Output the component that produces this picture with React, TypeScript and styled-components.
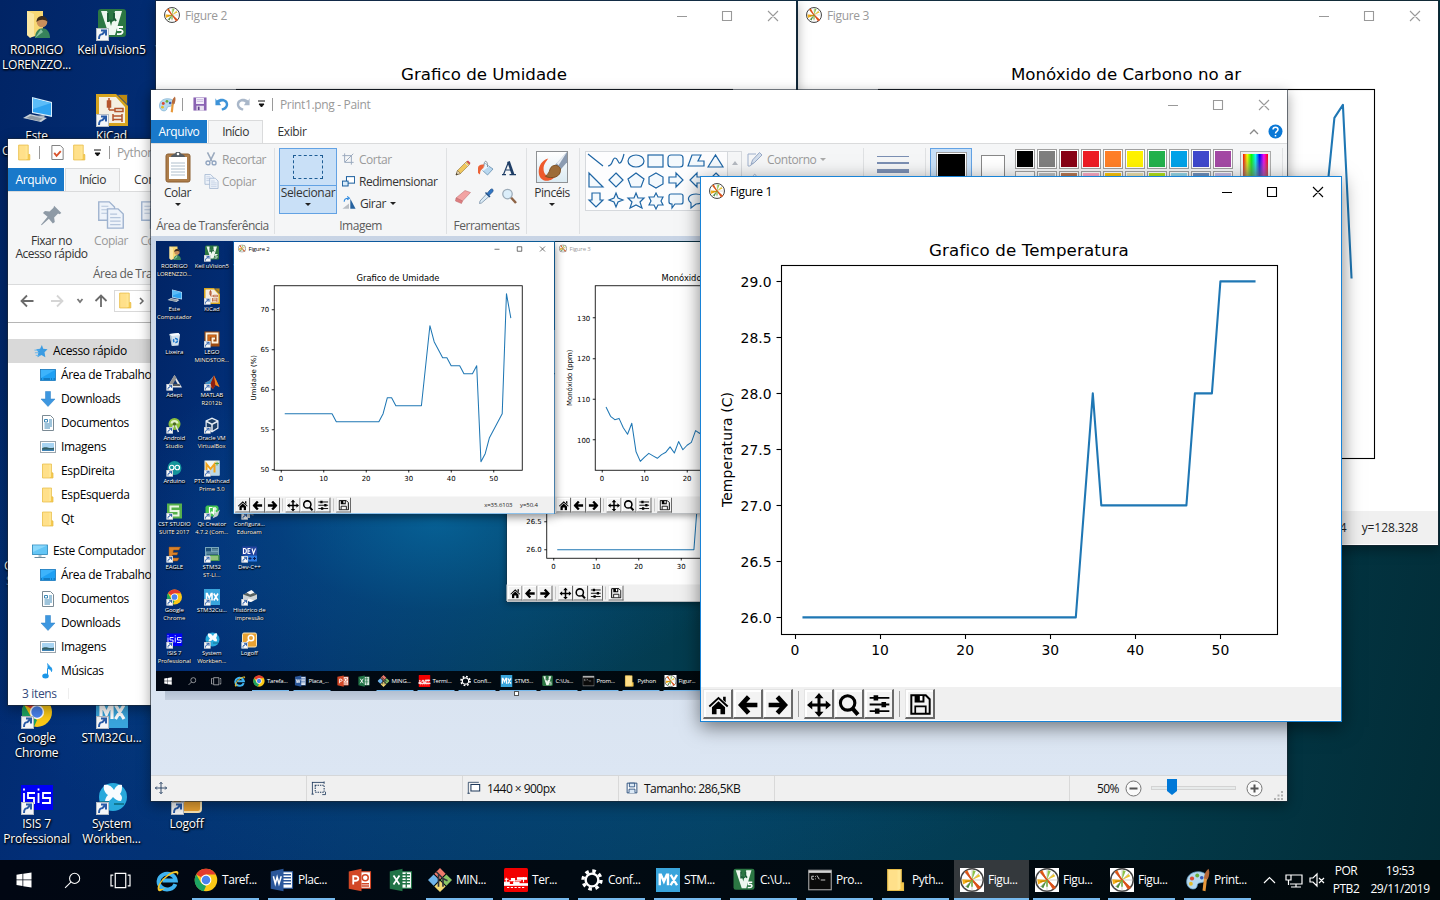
import React from "react";
import styled, { createGlobalStyle, css } from "styled-components";

const Global = createGlobalStyle`
  * { box-sizing: border-box; }
  html, body { margin: 0; padding: 0; overflow: hidden; background: #02304f; }
  body { font-family: "Open Sans", "Noto Sans", sans-serif; font-size: 12px; letter-spacing: -0.35px; color: #222; }
  svg { display: block; flex: none; }
`;

/* ---------- icons ---------- */

const paths: Record<string, React.ReactNode> = {
  user: (
    <>
      <path d="M6 3h16v24l-13 2-3-2z" fill="#f7d774" />
      <path d="M6 3l7 3v22l-4 2-3-3z" fill="#fbe7a3" />
      <circle cx="21" cy="14" r="5.3" fill="#c98f5c" />
      <path d="M15.5 14c0-8 11-8 11 0-2-3-8-3-11 0z" fill="#3a2a1c" />
      <path d="M14 30c0-13 15-13 15 0z" fill="#37835b" />
      <path d="M14 30l6-9 2 3z" fill="#8ac2a2" />
    </>
  ),
  computer: (
    <>
      <path d="M11 3l20 5v15l-20-4z" fill="#d7eefc" />
      <path d="M12 4.500l18 4.500v12.500l-18-3.500z" fill="#2fa3f0" />
      <path d="M12 4.500l18 4.500-18 6z" fill="#5bbcf8" />
      <path d="M2 24l7-4 17 4-6 4z" fill="#c9d1d8" />
      <path d="M5 24l5-2.500 12 3-4 2.500z" fill="#8f9aa4" />
      <path d="M14 22l9 2 1-3z" fill="#aab5bf" />
    </>
  ),
  bin: (
    <>
      <path d="M6 6l18-2 3 4-3 21-13 1z" fill="#d5e3ee" />
      <path d="M6 6l18-2 3 4-17 2z" fill="#f7fbff" />
      <path d="M10 10l-4-4 4 23 2 1z" fill="#a9bfd0" />
      <circle cx="18" cy="19" r="4" fill="none" stroke="#1c78cf" strokeWidth="3" strokeDasharray="6 2" />
    </>
  ),
  adept: (
    <>
      <path d="M16 2L31 27H1z" fill="#e5e5e5" />
      <path d="M16 9l8 14H9z" fill="#14356d" />
      <path d="M16 2l4 6-11 19H1z" fill="#8f9092" />
      <path d="M14 20h12l2 4H12z" fill="#55585c" />
    </>
  ),
  android: (
    <>
      <circle cx="16" cy="14" r="12" fill="#8bbf3d" />
      <path d="M8 13a8 7 0 0116 0z" fill="#e3f1c8" />
      <path d="M16 12l8 18M16 12L9 30" stroke="#dfe3e6" strokeWidth="3" />
      <circle cx="16" cy="14" r="3.500" fill="#4a6a22" />
    </>
  ),
  arduino: (
    <>
      <circle cx="16" cy="16" r="14" fill="#15959b" />
      <circle cx="10.500" cy="15" r="4.500" fill="none" stroke="#fff" strokeWidth="2.400" />
      <circle cx="21.500" cy="15" r="4.500" fill="none" stroke="#fff" strokeWidth="2.400" />
    </>
  ),
  cst: (
    <>
      <rect x="1" y="1" width="30" height="30" fill="#56b04c" />
      <path d="M25 7H8v9h16v9H7" fill="none" stroke="#e9f7e4" strokeWidth="4" />
    </>
  ),
  eagle: <path d="M5 2h23l-3 6H14l-1 5h10l-2 5h-9l-1 6h14l-3 6H5z" fill="#d9822b" stroke="#8c4a10" />,
  chrome: (
    <>
      <circle cx="16" cy="16" r="15" fill="#fbc916" />
      <path d="M16 16L3 8.500A15 15 0 0129 8.500H16z" fill="#e33b2e" />
      <path d="M3 8.500L9.500 20l6.500 4-3 7A15 15 0 013 8.500z" fill="#1da462" />
      <circle cx="16" cy="16" r="7.200" fill="#fff" />
      <circle cx="16" cy="16" r="5.700" fill="#4a83ee" />
    </>
  ),
  isis: (
    <>
      <rect y="3" width="32" height="25" fill="#0000f5" />
      <path d="M3 11v10M3 6.500v2M14 11H7v5h6v5H6M17.500 11v10M17.500 6.500v2M30 11h-8v5h7v5h-8" fill="none" stroke="#fff" strokeWidth="1.800" />
    </>
  ),
  keil: (
    <>
      <rect x="2" y="1" width="28" height="28" rx="3" fill="#2c7743" />
      <path d="M5 3h6l4 15 4-15h7l-7 24h-6z" fill="#eef7ef" />
      <path d="M12 5v9M12 11c2 3 6 2 6-1V5M18 10l2 3" stroke="#1d5f37" strokeWidth="2" fill="none" />
      <path d="M27 19h-5v3h3c3 1 2 5-4 4" fill="none" stroke="#fff" strokeWidth="1.800" />
    </>
  ),
  kicad: (
    <>
      <path d="M1 1h20l10 10v20H1z" fill="#f5efe2" />
      <path d="M0 0h21l11 11v21H0zM3 3v26h26V13l-9-10z" fill="#d6a41f" fillRule="evenodd" />
      <path d="M20 0h12v12z" fill="#1a3e7c" />
      <path d="M22 1l9 9V1z" fill="#bd8a10" />
      <path d="M13 4v12M11.500 7h3v6h-3zM13 16h6M19 14.500h8v3h-8zM17 22h9M17 25.500h9M17 20v7M26 20v8" stroke="#b4542d" strokeWidth="1.500" fill="none" />
    </>
  ),
  lego: (
    <>
      <rect x="1" y="1" width="30" height="30" fill="#9c4c12" />
      <path d="M5 27V5h22v18H17v-8h5" fill="none" stroke="#fff4df" strokeWidth="3.600" />
      <path d="M10 27V10h13" fill="none" stroke="#e0701c" strokeWidth="3" />
    </>
  ),
  matlab: (
    <>
      <path d="M1 18l10-5 9-10 11 23-8-4-5 8-7-7z" fill="#d9531e" />
      <path d="M1 18l10-5 9-10-7 17-4 3z" fill="#3b8fc7" />
      <path d="M20 3l3 19-5 8-5-10z" fill="#8d1f12" />
      <path d="M20 3l11 23-8-4z" fill="#f08a24" />
    </>
  ),
  vbox: (
    <>
      <path d="M16 1l13 6v16l-13 8L3 23V7z" fill="#e7eef5" />
      <path d="M16 4l9 4-9 5-9-5zM5.500 11l9 4.500V27l-9-5.500zM26.500 11l-9 4.500V27l9-5.500z" fill="#1c3e67" />
    </>
  ),
  mathcad: (
    <>
      <rect x="1" y="1" width="30" height="30" fill="#f2f6ef" />
      <path d="M1 31L31 1v30z" fill="#b8d8e8" />
      <path d="M5 25V8l8 10 8-10v17" fill="none" stroke="#f2a31b" strokeWidth="4" />
      <path d="M26 3v8M22 7h8" stroke="#5fa43b" strokeWidth="2" />
    </>
  ),
  qt: (
    <>
      <path d="M6 5h20l3 3v15l-4 4H6L3 23V8z" fill="#42c552" />
      <path d="M17 9h-6v11h8V9M15 17l5 6M22 8v12h4M20 12h6" stroke="#fff" strokeWidth="2.400" fill="none" />
      <path d="M17 31l4-9 11-9-5 13z" fill="#c5cdd3" />
    </>
  ),
  stlink: (
    <>
      <rect x="2" y="2" width="28" height="20" fill="#7aa7bc" />
      <rect x="4" y="4" width="10" height="7" fill="#1e4f76" />
      <path d="M16 5h12M16 8h12M5 14h23M5 17h23" stroke="#24566e" strokeWidth="1.600" />
      <rect x="12" y="18" width="19" height="12" fill="#4e9b4f" />
      <path d="M14 22h14M14 26h14" stroke="#d6e9a5" strokeWidth="2" />
    </>
  ),
  mx: (
    <>
      <rect width="32" height="32" fill="#39a5dc" />
      <path d="M5 23V9h1.500l4 9 4-9H16v14M19.500 9l8.500 14M28 9l-8.500 14" stroke="#fff" strokeWidth="3.200" fill="none" />
    </>
  ),
  butterfly: (
    <>
      <circle cx="17" cy="15" r="14" fill="#28a9dc" />
      <path d="M8 3c5-1 8 2 10 5 2-4 4-6 8-5 0 4 0 6-2 9 3 3 2 5 1 7-4 0-6-2-8-4-2 3-5 5-8 5 0-3 1-5 3-7-3-2-5-6-4-10z" fill="#f8fcff" />
      <path d="M4 20h9M18 22h10" stroke="#127994" strokeWidth="2" />
    </>
  ),
  wifi: (
    <>
      <path d="M2 12h28M5 17h22M15 2v28" stroke="#c6d0da" strokeWidth="4" />
      <path d="M10 20l14-8v14z" fill="#6e7f90" />
    </>
  ),
  dev: (
    <>
      <rect x="1" y="1" width="30" height="18" rx="2" fill="#24449e" />
      <path d="M4 5v10h2c5 0 5-10 0-10zM18 5h-5v10h5M13 10h4M21 5l3 10 4-10" stroke="#fff" strokeWidth="2.200" fill="none" />
      <rect x="6" y="19" width="25" height="12" fill="#2e7be2" />
      <path d="M14 25h6M17 22v6M23 25h6M26 22v6" stroke="#0c2058" strokeWidth="2" />
    </>
  ),
  printer: (
    <>
      <path d="M3 11l15-5 13 5v9l-12 6-16-6z" fill="#cdd3d6" />
      <path d="M3 11l15-5 13 5-13 5z" fill="#56605f" />
      <path d="M10 7l10-5 6 5-9 4z" fill="#f3f5f6" />
      <path d="M8 22l10 4 7-3-10-4z" fill="#fafafa" />
    </>
  ),
  key: (
    <>
      <rect x="2" y="2" width="28" height="28" rx="3" fill="#e9a233" stroke="#fbe6b5" strokeWidth="2" />
      <circle cx="19" cy="12" r="5.500" fill="none" stroke="#fff" strokeWidth="3" />
      <path d="M15 16l-8 9" stroke="#fff" strokeWidth="3" />
    </>
  ),
  ie: (
    <>
      <path d="M27 21a12 11 0 11.500-5H9" fill="none" stroke="#3fb3f0" strokeWidth="5.500" />
      <path d="M3 30C-2 22 20 0 30 3c2 1 1 4 0 6 0-5-5-4-10-1C10 14 4 22 5 27c2 2 6 0 8-1-4 4-8 6-10 4z" fill="#f5c52a" />
    </>
  ),
  word: (
    <>
      <rect x="15" y="5" width="15" height="22" fill="#fff" stroke="#2b579a" strokeWidth="1.500" />
      <path d="M17 9h11M17 13h11M17 17h11M17 21h11" stroke="#2b579a" strokeWidth="1.700" />
      <path d="M1 4.500L18 1v30L1 27.500z" fill="#2b579a" />
      <path d="M4.500 11l2.500 10 2.500-9 2.500 9L15 11" fill="none" stroke="#fff" strokeWidth="2" />
    </>
  ),
  ppt: (
    <>
      <rect x="15" y="5" width="15" height="22" fill="#fff" stroke="#d24726" strokeWidth="1.500" />
      <path d="M18 21h10M18 24h10" stroke="#d24726" strokeWidth="1.700" />
      <circle cx="23" cy="13" r="4" fill="none" stroke="#d24726" strokeWidth="2" />
      <path d="M1 4.500L18 1v30L1 27.500z" fill="#d24726" />
      <path d="M7 22V11h3c5 0 5 6 0 6H7" fill="none" stroke="#fff" strokeWidth="2.400" />
    </>
  ),
  excel: (
    <>
      <rect x="15" y="5" width="15" height="22" fill="#fff" stroke="#217346" strokeWidth="1.500" />
      <path d="M17 9h11M17 13h11M17 17h11M17 21h11M23 6v20" stroke="#217346" strokeWidth="1.700" />
      <path d="M1 4.500L18 1v30L1 27.500z" fill="#217346" />
      <path d="M6 10l8 12M14 10L6 22" stroke="#fff" strokeWidth="2.400" />
    </>
  ),
  git: (
    <>
      <path d="M16 0l7.500 7.500L16 15 8.500 7.500z" fill="#ef7a6b" />
      <path d="M7.500 8.500L15 16l-7.500 7.500L0 16z" fill="#6fb4ea" />
      <path d="M24.500 8.500L32 16l-7.500 7.500L17 16z" fill="#8cc665" />
      <path d="M16 17l7.500 7.500L16 32l-7.500-7.500z" fill="#f2d873" />
      <path d="M11 5l9 9v11M14 9v16M20 14l6 3" stroke="#33363d" strokeWidth="2.200" fill="none" />
    </>
  ),
  termite: (
    <>
      <rect width="32" height="32" rx="2" fill="#f20000" />
      <path d="M0 19h7v3h6v-3h7v2h12v2H0zM3 13v6M1 15h5M7 17h3v-3h4v4M15 17h8M18 13h12v2H18zM26 12v7" fill="#fff" stroke="#fff" strokeWidth="1.500" />
      <path d="M4 26h23" stroke="#fff" strokeWidth="1.300" strokeDasharray="3 2" />
    </>
  ),
  gear: (
    <>
      <circle cx="16" cy="16" r="8.500" fill="none" stroke="#fff" strokeWidth="3.200" />
      <circle cx="16" cy="16" r="12" fill="none" stroke="#fff" strokeWidth="4.500" strokeDasharray="4.700 4.725" />
    </>
  ),
  prompt: (
    <>
      <rect x="1" y="3" width="30" height="26" fill="#0a0a0a" stroke="#a4a4a4" strokeWidth="1.500" />
      <path d="M1 5h30" stroke="#d3d3d3" strokeWidth="3" />
      <path d="M8 11H5v4h3M10 11v1M10 14v1M12 10l3 5M17 16h6" stroke="#d6d6d6" strokeWidth="1.200" fill="none" />
    </>
  ),
  folder: (
    <>
      <path d="M5 2h18v28H5z" fill="#ffe694" />
      <path d="M5 2h13v28H5z" fill="#ffe08a" />
      <path d="M22 20l4-1v11h-8l4-2z" fill="#f5c94f" />
      <path d="M5 2h18v18h3v10H5z" fill="none" stroke="#e8bd48" strokeWidth="1.500" />
    </>
  ),
  mpl: (
    <>
      <circle cx="16" cy="16" r="15" fill="#fff" stroke="#444" strokeWidth="2" />
      <path d="M16 1v30M1 16h30M5.500 5.500l21 21M26.500 5.500l-21 21" stroke="#999" strokeWidth=".6" />
      <path d="M16 16L6 5l4-2z" fill="#f2711c" />
      <path d="M16 16L17 3l4 1z" fill="#8bc34a" />
      <path d="M16 16l11 9-3 4z" fill="#e2541b" />
      <path d="M16 16L3 15l1 7z" fill="#f5b01b" />
      <path d="M16 16l9-8 2 3z" fill="#e8c22c" />
      <path d="M16 16l-5 11-3-2z" fill="#4f8f3d" />
      <path d="M16 16L27 27M16 16L8 5" stroke="#d9521a" strokeWidth="2.500" />
      <path d="M16 17l-9 1" stroke="#c98a00" strokeWidth="2" />
      <path d="M16 16v9" stroke="#6cae3f" strokeWidth="2" />
    </>
  ),
  palette: (
    <>
      <path d="M16 5C6 5 0 12 1 20c1 8 10 10 13 6 2-3 0-5 4-6 5-1 11-2 10-8-1-5-6-7-12-7z" fill="#b5d9ef" stroke="#5f9bc4" />
      <circle cx="8" cy="14" r="2.800" fill="#d94a34" />
      <circle cx="15" cy="10" r="2.600" fill="#67ae3c" />
      <circle cx="6.500" cy="21" r="2.600" fill="#e6bd2c" />
      <circle cx="21" cy="13" r="2.400" fill="#3858b5" />
      <path d="M24 13l4 1-2 17-4-1z" fill="#e8993b" />
      <path d="M24 14l5 1c2-5 3-10 1-14-4 3-6 8-6 13z" fill="#b5693a" />
    </>
  ),
  desk: (
    <>
      <rect x="1" y="5" width="30" height="22" fill="#1ea0f4" stroke="#1173b8" strokeWidth="1.500" />
      <path d="M2 6h28L2 22z" fill="#3db3fb" />
      <path d="M2 24h28" stroke="#0b5b96" strokeWidth="2" strokeDasharray="2 3 13 2" />
    </>
  ),
  down: <path d="M11 1h10v15h9L16 31 2 16h9z" fill="#3d97e0" stroke="#2b7ec4" />,
  doc: (
    <>
      <path d="M5 1h16l6 6v24H5z" fill="#fff" stroke="#7b8a94" strokeWidth="2" />
      <path d="M9 9h6v5H9zM18 10h6M18 14h6M9 18h15M9 22h15M9 26h11" stroke="#3e89b7" strokeWidth="2" fill="none" />
    </>
  ),
  image: (
    <>
      <rect x="1" y="5" width="30" height="22" fill="#fff" stroke="#9aa5ad" strokeWidth="2" />
      <rect x="4" y="8" width="24" height="16" fill="#a8d4f2" />
      <path d="M4 19c8-6 15 2 24-2v7H4z" fill="#355f63" />
      <path d="M4 21h24v3H4z" fill="#3f83b5" />
    </>
  ),
  thispc: (
    <>
      <rect x="1" y="4" width="30" height="19" fill="#63c5f5" stroke="#2986b8" strokeWidth="1.600" />
      <path d="M2 5h28L2 18z" fill="#8bd8fb" />
      <path d="M13 26h6M5 29h22" stroke="#6b8a9c" strokeWidth="2" />
    </>
  ),
  music: (
    <>
      <path d="M15 1c2 6 11 7 8 16-1-4-4-6-8-6v14" fill="#1b96e8" stroke="#1b96e8" strokeWidth="2" />
      <ellipse cx="11" cy="26" rx="6.500" ry="5" fill="#1b96e8" />
    </>
  ),
  star: (
    <>
      <path d="M18 2l3 9 10 1-7 7 2 11-9-5-9 5 2-11-5-7 9-1z" fill="#3a9be2" />
      <path d="M1 14h12M2 20h10M4 26h9" stroke="#5bb2ee" strokeWidth="2" />
    </>
  ),
  checkdoc: (
    <>
      <path d="M4 1h18l6 6v24H4z" fill="#fff" stroke="#787878" strokeWidth="2" />
      <path d="M9 17l5 6 9-10" fill="none" stroke="#d9532c" strokeWidth="4" />
    </>
  ),
  save: (
    <>
      <path d="M1 1h30v30H1z" fill="#8a63b3" />
      <rect x="7" y="2" width="18" height="14" fill="#f3effa" />
      <path d="M9 6h14M9 10h14" stroke="#b9a5d5" strokeWidth="1.500" />
      <rect x="8" y="20" width="17" height="11" fill="#e8e2f0" />
      <rect x="11" y="22" width="4" height="8" fill="#5e3f8c" />
    </>
  ),
  undo: <path d="M1 3l3 5C16-1 32 6 30 19c-1 7-7 12-14 12l-1-5c8-2 11-7 9-12-2-4-9-5-14-1l4 6H1z" fill="#3d93d8" />,
  redo: <path d="M31 3l-3 5C16-1 0 6 2 19c1 7 7 12 14 12l1-5C9 24 6 19 8 14c2-4 9-5 14-1l-4 6h13z" fill="#a9b7c9" />,
  pin: <path d="M20 1l11 11-3 2-2-1-6 6 1 7-3 2-6-7L1 31l-1-1L10 18l-7-6 3-3 7 1 6-6z" fill="#8e9aa6" />,
  copy: (
    <>
      <path d="M2 1h12l6 6v15H2z" fill="#eef3fa" stroke="#9fb3cf" strokeWidth="1.600" />
      <path d="M5 6h8M5 10h12M5 14h12" stroke="#b5c5dc" strokeWidth="1.400" />
      <path d="M12 9h12l6 6v16H12z" fill="#eef3fa" stroke="#9fb3cf" strokeWidth="1.600" />
      <path d="M15 15h8M15 19h12M15 23h12M15 27h12" stroke="#b5c5dc" strokeWidth="1.400" />
    </>
  ),
  scissors: (
    <>
      <path d="M8 1l10 20M24 1L14 21" stroke="#9aa9bd" strokeWidth="3.500" />
      <circle cx="9" cy="25" r="4.500" fill="none" stroke="#8fa3bf" strokeWidth="3" />
      <circle cx="23" cy="25" r="4.500" fill="none" stroke="#8fa3bf" strokeWidth="3" />
    </>
  ),
  crop: <path d="M7 1v24h24M1 7h24v24M8 24L30 2" fill="none" stroke="#9aa9bd" strokeWidth="2.600" />,
  resize: (
    <>
      <rect x="11" y="4" width="20" height="16" fill="#fff" stroke="#1c5f9e" strokeWidth="2.500" />
      <rect x="1" y="15" width="14" height="12" fill="#d8ebfa" stroke="#1c5f9e" strokeWidth="2.500" />
    </>
  ),
  rotate: (
    <>
      <path d="M1 29L16 17v12z" fill="#b9bec4" />
      <path d="M19 29V6l12 23z" fill="#25629f" />
      <path d="M5 13c0-6 4-8 9-8M12 1l5 4-5 4" fill="none" stroke="#2f8ae0" strokeWidth="2.500" />
    </>
  ),
  pencil: (
    <>
      <path d="M2 30l3-9L23 3l6 6-18 18z" fill="#f0c75d" stroke="#80622a" />
      <path d="M23 3l3-2 5 5-2 3z" fill="#cf4b52" />
      <path d="M2 30l3-9 6 6z" fill="#e9d8b6" stroke="#63512e" />
      <path d="M2 30l1-4 3 3z" fill="#333" />
      <path d="M20 6l6 6" stroke="#ddd" strokeWidth="2" />
    </>
  ),
  bucket: (
    <>
      <path d="M14 7l16 11-11 12L6 18z" fill="#b9d8ef" stroke="#5f88ab" strokeWidth="1.500" />
      <path d="M14 7l8 6-12 9-4-4z" fill="#e9f5fd" />
      <path d="M12 13C11-1 20-1 19 14" fill="none" stroke="#7f8b95" strokeWidth="1.800" />
      <path d="M12 9C5 8 0 11 0 16v10l4 3c1-7 0-8 7-13z" fill="#ec6337" />
    </>
  ),
  fill: (
    <>
      <path d="M14 7l16 11-11 12L6 18z" fill="#d3deec" stroke="#8fa2c1" strokeWidth="1.800" />
      <path d="M12 13C11-1 20-1 19 14" fill="none" stroke="#9fb0cc" strokeWidth="1.800" />
    </>
  ),
  letterA: (
    <>
      <path d="M2 29h8M17 29h13" stroke="#1f3e66" strokeWidth="2.500" />
      <path d="M5 29L15 4M10 20h11" stroke="#1f3e66" strokeWidth="2.400" />
      <path d="M15 3l9 26" stroke="#1f3e66" strokeWidth="5.500" />
    </>
  ),
  eraser: (
    <>
      <path d="M2 20L20 5l11 4-16 17z" fill="#f2a3a3" stroke="#b86466" />
      <path d="M2 20l13 6-2 5L1 26z" fill="#df7e80" stroke="#b86466" />
    </>
  ),
  picker: (
    <>
      <path d="M17 12l5 5L7 30l-4 1 1-5z" fill="#dcecf7" stroke="#708aa2" strokeWidth="1.500" />
      <path d="M15 9l9 9" stroke="#204e86" strokeWidth="3" />
      <path d="M18 11l7-8c4-3 7 1 4 5l-7 7z" fill="#2f76c4" stroke="#204e86" strokeWidth="1.500" />
    </>
  ),
  lens: (
    <>
      <path d="M20 19l10 11" stroke="#8d6345" strokeWidth="5" />
      <circle cx="13" cy="12" r="9.500" fill="#dceefa" stroke="#9cabb8" strokeWidth="2.500" />
    </>
  ),
  outline: (
    <>
      <path d="M18 6H2v24h4l16-14" fill="none" stroke="#9fb0cc" strokeWidth="2" />
      <path d="M8 27l3-9L25 3l5 5-15 15z" fill="#d3deec" stroke="#8fa2c1" strokeWidth="1.800" />
    </>
  ),
  brush: (
    <>
      <path d="M32 0L19 14l6 5 7-8z" fill="#8b9bb1" />
      <path d="M32 0L21 12l2 2z" fill="#e8eef5" />
      <path d="M12 7C0 10-1 27 7 30c5 2 11-1 13-5-7 3-13 0-13-7 0-5 3-8 5-11z" fill="#ee5a2c" />
      <path d="M25 18c-2-5-9-5-11 0-1 4-2 5-5 8 7 3 17 1 16-8z" fill="#9d6c39" stroke="#7b4e22" />
    </>
  ),
  clipboard: (
    <>
      <rect x="4" y="3" width="24" height="28" rx="2" fill="#ad7d4a" stroke="#8b5e31" />
      <rect x="7" y="6" width="18" height="22" fill="#fff" />
      <path d="M9 12h14M9 15h14M9 18h14M9 21h14M9 24h14" stroke="#b0bfcc" />
      <path d="M9 6c0-3 4-2 5-5h4c1 3 5 2 5 5z" fill="#555e66" />
      <circle cx="16" cy="3" r="1.300" fill="#fff" />
    </>
  ),
  windows: <path d="M1 5.500l12-1.800V15H1zM14.500 3.500L31 1v14H14.500zM1 16.500h12v11.300L1 26zM14.500 16.500H31V31l-16.500-2.400z" fill="#fff" />,
  search: (
    <>
      <circle cx="20" cy="12" r="9.500" fill="none" stroke="#fff" strokeWidth="2" />
      <path d="M13 19L2 30" stroke="#fff" strokeWidth="2" />
    </>
  ),
  taskview: <path d="M8 4h16v24H8zM5 7H1.500v18H5M27 7h3.500v18H27" fill="none" stroke="#fff" strokeWidth="1.800" />,
  home: (
    <>
      <path d="M1 18L16 4l15 14-2 2L16 8 3 20z" fill="#000" />
      <path d="M6 20L16 11l10 9v11h-7v-8h-6v8H6zM23 4h4v9l-4-4z" fill="#000" />
    </>
  ),
  left: <path d="M17 3L5 16l12 13M6 16h25" fill="none" stroke="#000" strokeWidth="7.500" />,
  right: <path d="M15 3l12 13-12 13M26 16H1" fill="none" stroke="#000" strokeWidth="7.500" />,
  move: (
    <path d="M16 0l6 7h-4v7h7v-4l7 6-7 6v-4h-7v7h4l-6 7-6-7h4v-7H7v4l-7-6 7-6v4h7V7h-4z" fill="#000" />
  ),
  zoom: (
    <>
      <circle cx="14" cy="13" r="10.500" fill="none" stroke="#000" strokeWidth="4.500" />
      <path d="M21 21l8 9" stroke="#000" strokeWidth="6" />
    </>
  ),
  sliders: (
    <>
      <path d="M1 6h30M1 16h30M1 26h30" stroke="#000" strokeWidth="2.800" />
      <path d="M7 2h7v8H7zM19 12h7v8h-7zM9 22h7v8H9z" fill="#000" />
    </>
  ),
  disk: (
    <>
      <path d="M2 2h22l6 6v22H2z" fill="none" stroke="#000" strokeWidth="3" />
      <path d="M7 2h15v11H7z" fill="#000" />
      <path d="M15 3h4v7h-4z" fill="#fff" />
      <path d="M8 29V19h16v10" fill="none" stroke="#000" strokeWidth="2.600" />
    </>
  ),
  cross: <path d="M16 1v30M1 16h30M12 5l4-4 4 4M12 27l4 4 4-4M5 12l-4 4 4 4M27 12l4 4-4 4" fill="none" stroke="#1e395b" strokeWidth="2.400" />,
  dims: (
    <>
      <path d="M9 9h19v15H9z" fill="none" stroke="#1e395b" strokeWidth="2.200" strokeDasharray="3 2" />
      <path d="M3 2v26M2 3h26M1 28h5M28 1v5M24 29h7v-6" stroke="#1e395b" strokeWidth="1.800" fill="none" />
    </>
  ),
  canvas: (
    <>
      <path d="M9 8h20v15H9z" fill="#fff" stroke="#1e395b" strokeWidth="2.400" />
      <path d="M3 3v26M3 3h24M1 28h6" stroke="#1e395b" strokeWidth="1.800" fill="none" />
    </>
  ),
  diskBlue: (
    <>
      <path d="M3 3h26v26H3z" fill="#fff" stroke="#1e4575" strokeWidth="2.400" />
      <path d="M9 3h14v10H9zM8 29V19h16v10" fill="#dbe9f6" stroke="#1e4575" strokeWidth="2.200" />
    </>
  ),
};

const Glyph = ({ n, s = 16, h }: { n: string; s?: number; h?: number }) => (
  <svg width={s} height={h ?? s} viewBox="0 0 32 32" preserveAspectRatio={h ? "none" : undefined}>
    {paths[n]}
  </svg>
);

/* ---------- desktop ---------- */

const Desktop = styled.div`
  position: relative;
  width: 1440px;
  height: 900px;
  overflow: hidden;
  background:
    radial-gradient(ellipse 640px 360px at 560px 560px, rgba(8, 118, 175, 0.62), rgba(6, 90, 150, 0.3) 50%, transparent),
    linear-gradient(102deg, #012465 0%, #022f78 14%, #04386f 32%, #04405f 55%, #033b4c 78%, #022c36 100%);
`;

const IconGrid = styled.div`
  display: grid;
  grid-template-columns: repeat(3, 75px);
  grid-template-rows: repeat(10, 86px);
  grid-auto-flow: column;
  margin-left: -1px;
  position: absolute;
`;

const Shortcut = styled.div`
  display: flex;
  flex-direction: column;
  align-items: center;
  padding-top: 8px;
  color: #fff;
  line-height: 15px;
  text-align: center;
  white-space: pre;
  letter-spacing: -0.2px;
  text-shadow: 1px 1px 2px #000, 0 1px 2px #000;
  span { margin-top: 2px; }
`;

const Picture = styled.div`
  position: relative;
  width: 32px;
  height: 32px;
`;

const LinkBadge = styled.div`
  position: absolute;
  left: 0;
  bottom: -1px;
  width: 13px;
  height: 13px;
  background: #f4f6f8;
  border: 1px solid #b5bcc4;
`;

const items: [string, string, boolean?][] = [
  ["user", "RODRIGO\nLORENZZO...", true],
  ["computer", "Este\nComputador", true],
  ["bin", "Lixeira", true],
  ["adept", "Adept"],
  ["android", "Android\nStudio"],
  ["arduino", "Arduino"],
  ["cst", "CST STUDIO\nSUITE 2017"],
  ["eagle", "EAGLE"],
  ["chrome", "Google\nChrome"],
  ["isis", "ISIS 7\nProfessional"],
  ["keil", "Keil uVision5"],
  ["kicad", "KiCad"],
  ["lego", "LEGO\nMINDSTOR..."],
  ["matlab", "MATLAB\nR2012b"],
  ["vbox", "Oracle VM\nVirtualBox"],
  ["mathcad", "PTC Mathcad\nPrime 3.0"],
  ["qt", "Qt Creator\n4.7.2 (Com..."],
  ["stlink", "STM32\nST-LI..."],
  ["mx", "STM32Cu..."],
  ["butterfly", "System\nWorkben..."],
  ["", "VNC Viewer"],
  ["", ""],
  ["", ""],
  ["", ""],
  ["", ""],
  ["", ""],
  ["wifi", "Configura...\nEduroam"],
  ["dev", "Dev-C++"],
  ["printer", "Histórico de\nimpressão"],
  ["key", "Logoff"],
];

const Shortcuts = () => (
  <IconGrid>
    {items.map(([icon, label, own], i) => (
      <Shortcut key={i}>
        <Picture>
          {icon && <Glyph n={icon} s={32} />}
          {icon && !own && (
            <LinkBadge>
              <svg width="11" height="11" viewBox="0 0 11 11">
                <path d="M2 10c0-4 1-5 4-5M4 1.500h5v5M9 1.500L5 5.500" fill="none" stroke="#2a5ca8" strokeWidth="2" />
              </svg>
            </LinkBadge>
          )}
        </Picture>
        <span>{label}</span>
      </Shortcut>
    ))}
  </IconGrid>
);

/* ---------- taskbar ---------- */

const Bar = styled.div`
  position: absolute;
  left: 0;
  bottom: 0;
  width: 1440px;
  height: 40px;
  display: flex;
  background: linear-gradient(90deg, #010713, #010a12 40%, #01090c);
  color: #fff;
  letter-spacing: -0.45px;
`;

const Slot = styled.div<{ $w: number; $centered?: boolean; $gap?: number }>`
  width: ${(p) => p.$w}px;
  padding-right: ${(p) => p.$gap ?? 0}px;
  flex: none;
  display: flex;
  justify-content: ${(p) => (p.$centered ? "center" : "flex-start")};
  align-items: center;
`;

const Task = styled.div<{ $active?: boolean }>`
  position: relative;
  flex: 1;
  height: 40px;
  display: flex;
  align-items: center;
  gap: 4px;
  padding-left: ${(p) => (p.$active ? 6 : 2)}px;
  white-space: nowrap;
  border-bottom: 2px solid #76b9ed;
  padding-top: 2px;
  background: ${(p) => (p.$active ? "#34393d" : "transparent")};
  span { padding-bottom: 2px; }
`;

const White = styled.div`
  background: #fff;
`;

const Tray = styled.div`
  display: flex;
  align-items: center;
  margin-left: auto;
  padding-right: 3px;
`;

const TrayText = styled.div<{ $w: number }>`
  width: ${(p) => p.$w}px;
  text-align: center;
  line-height: 18px;
`;

type TaskDef = { w: number; gap?: number; icon: string; text?: string; active?: boolean };

const TaskStrip = ({ tasks, tray }: { tasks: TaskDef[]; tray?: boolean }) => (
  <Bar>
    <Slot $w={48} $centered><Glyph n="windows" s={16} /></Slot>
    <Slot $w={48} $centered><Glyph n="search" s={17} /></Slot>
    <Slot $w={48} $centered><Glyph n="taskview" s={21} h={19} /></Slot>
    <Slot $w={48} $centered $gap={2}><Glyph n="ie" s={23} /></Slot>
    {tasks.map((t, i) =>
      t.text ? (
        <Slot key={i} $w={t.w} $gap={t.gap ?? 9}>
          <Task $active={t.active}>
            {t.icon === "mpl" ? <White><Glyph n="mpl" s={24} /></White> : <Glyph n={t.icon} s={24} />}
            <span>{t.text}</span>
          </Task>
        </Slot>
      ) : (
        <Slot key={i} $w={t.w} $centered $gap={t.gap}><Glyph n={t.icon} s={24} /></Slot>
      )
    )}
    {tray && (
      <Tray>
        <svg width="66" height="20" viewBox="0 0 66 20" fill="none" stroke="#fff" strokeWidth="1.200">
          <path d="M1 13l5.500-5.500L12 13M27 5h12v9H27M23 5h5v5h-5zM25.500 10v5M33 14v3M28 17h10M47 8h3l4-4v12l-4-4h-3zM56 8l5 5M61 8l-5 5" />
        </svg>
        <TrayText $w={34}>POR<br />PTB2</TrayText>
        <TrayText $w={74}>19:53<br />29/11/2019</TrayText>
      </Tray>
    )}
  </Bar>
);

const mainTasks: TaskDef[] = [
  { w: 76, icon: "chrome", text: "Taref..." },
  { w: 72, gap: 5, icon: "word", text: "Plac..." },
  { w: 40, icon: "ppt" },
  { w: 46, gap: 5, icon: "excel" },
  { w: 76, icon: "git", text: "MIN..." },
  { w: 76, icon: "termite", text: "Ter..." },
  { w: 76, icon: "gear", text: "Conf..." },
  { w: 76, icon: "mx", text: "STM..." },
  { w: 76, icon: "keil", text: "C:\\U..." },
  { w: 76, icon: "prompt", text: "Pro..." },
  { w: 72, gap: 5, icon: "folder", text: "Pyth..." },
  { w: 79, gap: 4, icon: "mpl", text: "Figu...", active: true },
  { w: 75, gap: 8, icon: "mpl", text: "Figu..." },
  { w: 76, icon: "mpl", text: "Figu..." },
  { w: 67, gap: 0, icon: "palette", text: "Print..." },
];

const oldTasks: TaskDef[] = [
  { w: 83, icon: "chrome", text: "Tarefa..." },
  { w: 78, gap: 4, icon: "word", text: "Placa_..." },
  { w: 42, icon: "ppt" },
  { w: 46, gap: 4, icon: "excel" },
  { w: 82, gap: 8, icon: "git", text: "MING..." },
  { w: 82, gap: 8, icon: "termite", text: "Termi..." },
  { w: 82, gap: 8, icon: "gear", text: "Confi..." },
  { w: 82, gap: 8, icon: "mx", text: "STM3..." },
  { w: 82, gap: 8, icon: "keil", text: "C:\\Us..." },
  { w: 82, gap: 8, icon: "prompt", text: "Prom..." },
  { w: 82, gap: 8, icon: "folder", text: "Python" },
  { w: 82, gap: 8, icon: "mpl", text: "Figur..." },
];

/* ---------- windows ---------- */

const Frame = styled.div<{ $x: number; $y: number; $w: number; $h: number; $active?: boolean }>`
  position: absolute;
  left: ${(p) => p.$x}px;
  top: ${(p) => p.$y}px;
  width: ${(p) => p.$w}px;
  height: ${(p) => p.$h}px;
  display: flex;
  flex-direction: column;
  background: #fff;
  background-clip: padding-box;
  border: 1px solid ${(p) => (p.$active ? "#1883d7" : "rgba(30, 40, 52, 0.6)")};
  box-shadow: ${(p) => (p.$active ? "0 5px 18px rgba(0,0,0,.5)" : "0 4px 12px rgba(0,0,0,.35)")};
`;

const TitleBar = styled.div<{ $active?: boolean; $h?: number }>`
  height: ${(p) => p.$h ?? 30}px;
  flex: none;
  display: flex;
  align-items: center;
  color: ${(p) => (p.$active ? "#000" : "#999")};
  padding: 0 0 2px 8px;
  gap: 5px;
  white-space: nowrap;
`;

const Spacer = styled.div`
  flex: 1;
`;

const ControlBox = styled.div`
  margin-top: 2px;
`;

const Controls = ({ active }: { active?: boolean }) => (
  <ControlBox>
    <svg width="138" height="28" viewBox="0 0 138 28" fill="none" stroke={active ? "#000" : "#999"}>
      <path d="M19 14.500h10M64.500 9.500h9v9h-9zM110 9l10 10M120 9l-10 10" strokeWidth="1.100" />
    </svg>
  </ControlBox>
);

/* ---------- matplotlib figures ---------- */

type ChartDef = {
  title: string;
  spread: number;
  ylabel: string;
  labelX: number;
  min: number;
  max: number;
  ticks: [number, string][];
  data: [number, number][];
};

const AX = { l: 80, r: 576, t: 57.6, b: 427.2 };
const px = (v: number) => AX.l + ((v + 1.65) / 58.3) * (AX.r - AX.l);

const Chart = ({ c, bold }: { c: ChartDef; bold?: boolean }) => {
  const py = (v: number) => AX.b - ((v - c.min) / (c.max - c.min)) * (AX.b - AX.t);
  const w = bold ? 1.7 : 1.1;
  return (
    <svg width="640" height="480" viewBox="0 0 640 480" fontFamily="DejaVu Sans, sans-serif" fontSize="13.9" letterSpacing="0">
      <text x="328" y="49" fontSize="16.67" letterSpacing={c.spread} textAnchor="middle">{c.title}</text>
      <text transform={`translate(${c.labelX} 242.500) rotate(-90)`} letterSpacing={c.spread} textAnchor="middle">{c.ylabel}</text>
      {[0, 10, 20, 30, 40, 50].map((v) => (
        <g key={v}>
          <path d={`M${Math.floor(px(v)) + 0.5} 427v5`} stroke="#000" strokeWidth={w} />
          <text x={px(v)} y="448" textAnchor="middle">{v}</text>
        </g>
      ))}
      {c.ticks.map(([v, s]) => (
        <g key={s}>
          <path d={`M75.500 ${Math.floor(py(v)) + 0.5}h5`} stroke="#000" strokeWidth={w} />
          <text x="70.500" y={py(v) + 5.3} textAnchor="end">{s}</text>
        </g>
      ))}
      <polyline
        points={c.data.map(([x, y]) => `${px(x).toFixed(1)},${py(y).toFixed(1)}`).join(" ")}
        fill="none" stroke="#1f77b4" strokeWidth="2.080" strokeLinejoin="round" strokeLinecap="square"
      />
      <rect x="80.500" y="58.500" width="496" height="369" fill="none" stroke="#000" strokeWidth={w} />
    </svg>
  );
};

const temperature: ChartDef = {
  title: "Grafico de Temperatura", spread: 0.13, ylabel: "Temperatura (C)", labelX: 31, min: 25.85, max: 29.15,
  ticks: [[26, "26.0"], [26.5, "26.5"], [27, "27.0"], [27.5, "27.5"], [28, "28.0"], [28.5, "28.5"], [29, "29.0"]],
  data: [[1, 26], [33, 26], [34, 27], [35, 28], [36, 27], [46, 27], [47, 28], [49, 28], [50, 29], [54, 29]],
};

const humidity: ChartDef = {
  title: "Grafico de Umidade", spread: 0, ylabel: "Umidade (%)", labelX: 43, min: 49.95, max: 73.05,
  ticks: [[50, "50"], [55, "55"], [60, "60"], [65, "65"], [70, "70"]],
  data: [[1, 57], [12, 57], [13, 56], [23, 56], [24, 57], [25, 59], [26, 59], [27, 58], [33, 58], [34, 63], [35, 68], [36, 66], [37, 65], [38, 64], [39, 64], [40, 63], [42, 63], [43, 62], [45, 62], [46, 63], [47, 51], [48, 52], [49, 54], [50, 55], [52, 57], [53, 72], [54, 69]],
};

const monoxide: ChartDef = {
  title: "Monóxido de Carbono no ar", spread: 0, ylabel: "Monóxido (ppm)", labelX: 34, min: 92.6, max: 138,
  ticks: [[100, "100"], [110, "110"], [120, "120"], [130, "130"]],
  data: [108, 105.8, 105, 105.3, 103, 101.4, 104.1, 97.1, 94.75, 95.8, 96.7, 96.1, 95.5, 96.4, 97, 98.3, 96.8, 99.6, 97.6, 98.7, 99.4, 102.3, 101.6, 103, 104, 103, 105, 106, 104, 107, 108, 106, 109, 110, 108, 107, 109, 111, 110, 112, 111, 113, 112, 110, 111, 113, 114, 112, 115, 116, 124, 134.4, 136, 114.8].map((y, i) => [i + 1, y] as [number, number]),
};

const ToolRow = styled.div`
  height: 33px;
  background: #f0f0f0;
  display: flex;
  align-items: center;
  padding: 0 20px 0 2px;
  letter-spacing: -0.1px;
  color: #222;
  white-space: pre;
`;

const ToolButton = styled.div`
  width: 30px;
  height: 30px;
  display: flex;
  align-items: center;
  justify-content: center;
  padding: 3px 2px 0 3px;
  background: #f3f3f3;
  border: 1px solid #e3e3e3;
  border-right: 2px solid #696969;
  border-bottom: 2px solid #696969;
  box-shadow: inset 2px 2px 0 #fff;
`;

const ToolGap = styled.div`
  width: 11px;
  height: 26px;
  background: linear-gradient(#a0a0a0, #a0a0a0) 5px 0 / 1px 100% no-repeat;
`;

const Figure = ({ x, y, n, chart, active, status, small }: {
  x: number; y: number; n: number; chart: ChartDef; active?: boolean; status?: string; small?: boolean;
}) => (
  <Frame $x={x} $y={y} $w={642} $h={546} $active={active}>
    <TitleBar $active={active}>
      <Glyph n="mpl" s={16} />
      <span>Figure {n}</span>
      <Spacer />
      <Controls active={active} />
    </TitleBar>
    <Chart c={chart} bold={small} />
    <ToolRow>
      <ToolButton><Glyph n="home" s={21} /></ToolButton>
      <ToolButton><Glyph n="left" s={20} /></ToolButton>
      <ToolButton><Glyph n="right" s={20} /></ToolButton>
      <ToolGap />
      <ToolButton><Glyph n="move" s={24} /></ToolButton>
      <ToolButton><Glyph n="zoom" s={22} /></ToolButton>
      <ToolButton><Glyph n="sliders" s={21} /></ToolButton>
      <ToolGap />
      <ToolButton><Glyph n="disk" s={21} /></ToolButton>
      <Spacer />
      <span>{status}</span>
    </ToolRow>
  </Frame>
);

/* ---------- ribbon parts ---------- */

const Divider = styled.div`
  width: 1px;
  height: 13px;
  background: #9a9a9a;
`;

const At = styled.div<{ $l?: number }>`
  margin-left: ${(p) => p.$l ?? 0}px;
`;

const Caret = styled.div<{ $color?: string; $m?: string }>`
  width: 0;
  height: 0;
  margin: ${(p) => p.$m ?? "0"};
  border: 3px solid transparent;
  border-top-color: ${(p) => p.$color ?? "#222"};
  border-bottom: 0;
`;

const QuickMenu = () => (
  <svg width="8" height="8" viewBox="0 0 8 8"><path d="M0 1h7M1 4h5L3.500 7z" stroke="#111" fill="#111" /></svg>
);

const Tabs = styled.div`
  height: 24px;
  flex: none;
  display: flex;
  border-bottom: 1px solid #dadbdc;
  line-height: 24px;
  color: #333;
`;

const Tab = styled.div<{ $w: number; $kind?: "file" | "on" }>`
  width: ${(p) => p.$w}px;
  text-align: center;
  flex: none;
  white-space: nowrap;
  ${(p) => p.$kind === "file" && css`background: #1979ca; color: #fff; height: 23px; margin-right: 1px;`}
  ${(p) => p.$kind === "on" && css`background: #f5f6f7; border: 1px solid #dadbdc; border-bottom: 0; line-height: 22px; letter-spacing: -0.5px;`}
`;

const Ribbon = styled.div`
  height: 92px;
  flex: none;
  display: flex;
  background: #f5f6f7;
  padding-top: 4px;
  letter-spacing: -0.48px;
`;

const Group = styled.div<{ $w: number; $bare?: boolean }>`
  width: ${(p) => p.$w}px;
  height: 86px;
  flex: none;
  display: flex;
  flex-direction: column;
  border-right: ${(p) => (p.$bare ? "0" : "1px solid #dfe1e3")};
  color: #333;
  white-space: nowrap;
`;

const GroupBody = styled.div`
  flex: 1;
  display: flex;
`;

const GroupName = styled.div<{ $left?: number }>`
  height: 17px;
  line-height: 18px;
  text-align: ${(p) => (p.$left ? "left" : "center")};
  padding-left: ${(p) => p.$left ?? 0}px;
  color: #5c5c5c;
`;

const Tall = styled.div<{ $w: number; $muted?: boolean }>`
  width: ${(p) => p.$w}px;
  display: flex;
  flex-direction: column;
  align-items: center;
  color: ${(p) => (p.$muted ? "#999" : "#333")};
  line-height: 13px;
  text-align: center;
`;

const Gap = styled.div<{ $h: number }>`
  height: ${(p) => p.$h}px;
  flex: none;
`;

const SelectButton = styled.div`
  width: 58px;
  height: 66px;
  margin: 0 5px 0 4px;
  display: flex;
  flex-direction: column;
  align-items: center;
  background: #c9e0f7;
  border: 1px solid #62a2e4;
  line-height: 14px;
  letter-spacing: -0.35px;
`;

const SelectTop = styled.div`
  width: 56px;
  height: 37px;
  border-bottom: 1px solid #62a2e4;
  padding: 6px 13px;
`;

const Marquee = styled.div`
  width: 30px;
  height: 24px;
  border: 1px dashed #1d5c94;
`;

const Stack = styled.div`
  display: flex;
  flex-direction: column;
`;

const Line = styled.div<{ $muted?: boolean; $gap?: number }>`
  height: 22px;
  display: flex;
  align-items: center;
  gap: ${(p) => p.$gap ?? 4}px;
  color: ${(p) => (p.$muted ? "#9a9a9a" : "#333")};
`;

const Tools = styled.div`
  display: grid;
  grid-template-columns: repeat(3, 16px);
  grid-auto-rows: 16px;
  gap: 12px 7px;
  margin: 12px 0 0 8px;
`;

const BrushBox = styled.div`
  width: 32px;
  height: 32px;
  border: 1px solid #8f9295;
  background: linear-gradient(#fff, #dbeaf2);
`;

const ShapeBox = styled.div`
  width: 157px;
  height: 60px;
  margin: 3px 5px 0 5px;
  border: 1px solid #d6d9dd;
  display: flex;
  background: #fdfdfe;
`;

const ShapeScroll = styled.div`
  width: 14px;
  height: 58px;
  border-left: 1px solid #d6d9dd;
  background: #f5f6f7;
  padding: 9px 4px;
`;

const Shapes = () => (
  <svg width="141" height="58" viewBox="0 0 141 58" fill="#f4f9fd" stroke="#1f66a5" strokeWidth="1.200">
    <path d="M2 2l15 12M22 14c5 0 4-8 7-8s3 6 5 5 3-5 4-9" fill="none" />
    <ellipse cx="50" cy="9" rx="8" ry="6" />
    <rect x="62" y="3" width="15" height="12" /><rect x="82" y="3" width="15" height="12" rx="3" />
    <path d="M102 14l4-11h9l-3 6h6v5zM122 15l7.500-12 7.500 12zM3 21v14h14zM30 21l7 7-7 7-7-7zM50 21l8 6-3 8H45l-3-8zM70 21l7 4v7l-7 4-7-4v-7zM83 25h7v-4l7 7-7 7v-4h-7zM118 25h-7v-4l-7 7 7 7v-4h7zM130 21l7 7h-4v7h-6v-7h-4zM6 41h8v7h3l-7 7-7-7h3zM30 41l2 5 5 2-5 2-2 5-2-5-5-2 5-2zM50 41l2 5h6l-4 4 2 6-6-3-6 3 2-6-4-4h6zM70 41l2 4h5l-2 4 2 4h-5l-2 4-2-4h-5l2-4-2-4h5zM85 42h10q2 0 2 2v6q0 2-2 2h-6l-3 4v-4q-3 0-3-2v-6q0-2 2-2zM110 42c10 0 10 10 0 10l-5 4v-5c-5-4-2-9 5-9zM130 42c10 0 10 10 0 10l-5 4v-5c-5-4-2-9 5-9z" />
  </svg>
);

const Strokes = styled.div`
  width: 62px;
  padding: 8px 0 0 13px;
  display: flex;
  flex-direction: column;
  gap: 5px;
`;

const Stroke = styled.div<{ $h: number }>`
  width: 32px;
  height: ${(p) => p.$h}px;
  background: #7b8fb3;
`;

const ColorSlot = styled.div`
  width: 42px;
  height: 66px;
  margin: 0 9px 0 4px;
  padding: 3px 5px;
  background: #c9e0f7;
  border: 1px solid #62a2e4;
`;

const Swatch = styled.div<{ $c: string; $s: number; $edge?: string }>`
  width: ${(p) => p.$s}px;
  height: ${(p) => p.$s}px;
  flex: none;
  background: ${(p) => p.$c};
  border: 1px solid ${(p) => p.$edge ?? "#a0a0a0"};
  box-shadow: inset 0 0 0 1px #fff;
`;

const SwatchGrid = styled.div`
  display: grid;
  grid-template-columns: repeat(10, 20px);
  gap: 2px 2px;
  margin: 1px 8px 0 10px;
  align-content: start;
`;

const Spectrum = styled.div`
  width: 29px;
  height: 30px;
  margin-top: 4px;
  border: 2px solid #eee;
  outline: 1px solid #aaa;
  background: linear-gradient(transparent, rgba(128,128,128,.8)), linear-gradient(90deg, #f00, #ff0, #0f0, #0ff, #00f, #f0f, #f00);
`;

const palette = ["#000", "#7f7f7f", "#880015", "#ed1c24", "#ff7f27", "#fff200", "#22b14c", "#00a2e8", "#3f48cc", "#a349a4",
  "#fff", "#c3c3c3", "#b97a57", "#ffaec9", "#ffc90e", "#efe4b0", "#b5e61d", "#99d9ea", "#7092be", "#c8bfe7"];

/* ---------- paint ---------- */

const Workspace = styled.div`
  position: relative;
  height: 539px;
  flex: none;
  overflow: hidden;
  padding: 5px;
  background: linear-gradient(#c8d4e5, #d3deec 35%, #dce6f3);
`;

const Sheet = styled.div`
  width: 720px;
  height: 450px;
  overflow: hidden;
`;

const SheetShade = styled.div`
  position: absolute;
  left: 14px;
  top: 455px;
  width: 722px;
  height: 9px;
  background: linear-gradient(#b2bfd1, #c6d1e0);
`;

const Handle = styled.div`
  position: absolute;
  left: 363px;
  top: 455px;
  width: 5px;
  height: 5px;
  background: #fff;
  border: 1px solid #555;
`;

const Half = styled.div`
  width: 1440px;
  height: 900px;
  transform: scale(0.5);
  transform-origin: 0 0;
`;

const StatusBar = styled.div`
  flex: 1;
  display: flex;
  background: #f0f0f0;
  border-top: 1px solid #d5d7d9;
  color: #111;
  letter-spacing: -0.55px;
`;

const Cell = styled.div<{ $w: number; $last?: boolean }>`
  width: ${(p) => p.$w}px;
  flex: none;
  display: flex;
  align-items: center;
  gap: 6px;
  padding-left: 4px;
  padding-bottom: 1px;
  border-right: ${(p) => (p.$last ? "0" : "1px solid #d9d9d9")};
`;

const Track = styled.div`
  width: 85px;
  height: 4px;
  margin: 0 4px 0 3px;
  border: 1px solid #d3d3d3;
  background: #e7eaea;
  position: relative;
`;

const Thumb = styled.div`
  position: absolute;
  left: 15px;
  top: -8px;
  width: 10px;
  height: 16px;
  background: #0078d7;
  clip-path: polygon(0 0, 100% 0, 100% 75%, 50% 100%, 0 75%);
`;

const Grip = () => (
  <svg width="9" height="9" viewBox="0 0 9 9" fill="#b0b0b0">
    <path d="M7 0h2v2H7zM7 3.500h2v2H7zM3.500 3.500h2v2h-2zM7 7h2v2H7zM3.500 7h2v2h-2zM0 7h2v2H0z" />
  </svg>
);

const GripCorner = styled.div`
  align-self: flex-end;
  margin-left: 5px;
`;

const Round = ({ plus }: { plus?: boolean }) => (
  <svg width="17" height="17" viewBox="0 0 17 17">
    <circle cx="8.500" cy="8.500" r="7.500" fill="#fafafa" stroke="#777" />
    <path d={plus ? "M4.500 8.500h8M8.500 4.500v8" : "M4.500 8.500h8"} stroke="#555" strokeWidth="2" />
  </svg>
);

const HelpRow = styled.div`
  display: flex;
  align-items: center;
  gap: 9px;
  margin-left: auto;
  padding-right: 4px;
`;

const Paint = () => (
  <Frame $x={150} $y={89} $w={1138} $h={713}>
    <TitleBar>
      <Glyph n="palette" s={17} />
      <At $l={-4} /><Divider />
      <At $l={0} /><Glyph n="save" s={14} />
      <At $l={-2} /><Glyph n="undo" s={14} />
      <At $l={-3} /><Glyph n="redo" s={14} />
      <At $l={-2} /><QuickMenu />
      <At $l={-4} /><Divider />
      <At $l={-3} /><span>Print1.png - Paint</span>
      <Spacer />
      <Controls />
    </TitleBar>
    <Tabs>
      <Tab $w={56} $kind="file">Arquivo</Tab>
      <Tab $w={55} $kind="on">Início</Tab>
      <Tab $w={58}>Exibir</Tab>
      <HelpRow>
        <svg width="10" height="6" viewBox="0 0 10 6"><path d="M1 5l4-4 4 4" fill="none" stroke="#888" strokeWidth="1.300" /></svg>
        <svg width="15" height="15" viewBox="0 0 15 15">
          <circle cx="7.500" cy="7.500" r="7" fill="#0a78d6" />
          <path d="M5 5.500c0-3 5-3 5 0 0 2-2.500 1.700-2.500 4M7.500 11v1.400" stroke="#fff" strokeWidth="1.500" fill="none" />
        </svg>
      </HelpRow>
    </Tabs>
    <Ribbon>
      <Group $w={124}>
        <GroupBody>
          <Tall $w={53}>
            <Gap $h={3} /><Glyph n="clipboard" s={32} /><Gap $h={3} />Colar<Caret $m="4px 0 0" />
          </Tall>
          <Stack>
            <Line $muted><Glyph n="scissors" s={14} />Recortar</Line>
            <Line $muted $gap={3}><Glyph n="copy" s={15} />Copiar</Line>
          </Stack>
        </GroupBody>
        <GroupName>Área de Transferência</GroupName>
      </Group>
      <Group $w={172}>
        <GroupBody>
          <SelectButton>
            <SelectTop><Marquee /></SelectTop>
            <span>Selecionar</span>
            <Caret $m="3px 0 0" />
          </SelectButton>
          <Stack>
            <Line $muted $gap={5}><Glyph n="crop" s={12} />Cortar</Line>
            <Line><Glyph n="resize" s={13} />Redimensionar</Line>
            <Line><Glyph n="rotate" s={14} />Girar<Caret /></Line>
          </Stack>
        </GroupBody>
        <GroupName>Imagem</GroupName>
      </Group>
      <Group $w={80}>
        <GroupBody>
          <Tools>
            {["pencil", "bucket", "letterA", "eraser", "picker", "lens"].map((t) => <Glyph key={t} n={t} s={16} />)}
          </Tools>
        </GroupBody>
        <GroupName>Ferramentas</GroupName>
      </Group>
      <Group $w={53}>
        <Tall $w={50}>
          <Gap $h={3} /><BrushBox><Glyph n="brush" s={30} /></BrushBox><Gap $h={3} />Pincéis<Caret $m="4px 0 0" />
        </Tall>
      </Group>
      <Group $w={284}>
        <GroupBody>
          <ShapeBox>
            <Shapes />
            <ShapeScroll><svg width="6" height="4" viewBox="0 0 6 4"><path d="M0 4l3-4 3 4z" fill="#b4b9c0" /></svg></ShapeScroll>
          </ShapeBox>
          <Stack>
            <Line $muted><Glyph n="outline" s={16} />Contorno<Caret $color="#aaa" /></Line>
            <Line $muted><Glyph n="fill" s={16} />Preenchimento</Line>
          </Stack>
        </GroupBody>
      </Group>
      <Group $w={62}>
        <Strokes><Stroke $h={1} /><Stroke $h={2} /><Stroke $h={4} /><Stroke $h={6} /></Strokes>
      </Group>
      <Group $w={357}>
        <GroupBody>
          <ColorSlot><Swatch $c="#000" $s={31} /></ColorSlot>
          <Stack><Gap $h={7} /><Swatch $c="#fff" $s={24} $edge="#888" /></Stack>
          <SwatchGrid>{palette.map((c) => <Swatch key={c} $c={c} $s={20} />)}</SwatchGrid>
          <Spectrum />
        </GroupBody>
      </Group>
    </Ribbon>
    <Workspace>
      <Sheet>
        <Half>
          <Desktop>
            <Shortcuts />
            <Figure x={700} y={176} n={1} chart={temperature} small />
            <Figure x={797} y={0} n={3} chart={monoxide} small />
            <Figure x={155} y={0} n={2} chart={humidity} active small status="x=35.6103     y=50.4    " />
            <TaskStrip tasks={oldTasks} />
          </Desktop>
        </Half>
      </Sheet>
      <SheetShade />
      <Handle />
    </Workspace>
    <StatusBar>
      <Cell $w={156}><Glyph n="cross" s={12} /></Cell>
      <Cell $w={156}><Glyph n="dims" s={15} /></Cell>
      <Cell $w={156}><Glyph n="canvas" s={14} />1440 × 900px</Cell>
      <Cell $w={156}><At $l={-3} /><Glyph n="diskBlue" s={12} />Tamanho: 286,5KB</Cell>
      <Cell $w={295} />
      <Cell $w={217} $last>
        <At $l={17} />50%<Round /><Track><Thumb /></Track><Round plus />
        <GripCorner><Grip /></GripCorner>
      </Cell>
    </StatusBar>
  </Frame>
);

/* ---------- explorer ---------- */

const NavBar = styled.div`
  height: 38px;
  flex: none;
  border-top: 1px solid #dadbdc;
  display: flex;
  align-items: center;
  padding: 0 0 6px 12px;
`;

const Address = styled.div`
  width: 300px;
  height: 22px;
  display: flex;
  align-items: center;
  gap: 5px;
  padding-left: 2px;
  border: 1px solid #d9d9d9;
`;

const Tree = styled.div`
  padding-top: 16px;
  border-top: 1px solid #b5b5b5;
  flex: 1;
`;

const Node = styled.div<{ $d?: number; $on?: boolean; $gap?: number }>`
  height: 24px;
  display: flex;
  align-items: center;
  gap: 5px;
  white-space: nowrap;
  color: #000;
  padding: 0 0 1px ${(p) => p.$d ?? 32}px;
  margin-top: ${(p) => p.$gap ?? 0}px;
  background: ${(p) => (p.$on ? "#d9d9d9" : "transparent")};
`;

const Count = styled.div`
  height: 23px;
  display: flex;
  align-items: center;
  gap: 11px;
  padding: 0 0 2px 14px;
  color: #34497a;
`;

const CountRule = styled.div`
  width: 1px;
  height: 11px;
  background: #eee;
`;

const Explorer = () => (
  <Frame $x={7} $y={138} $w={560} $h={568}>
    <TitleBar $h={29}>
      <Glyph n="folder" s={17} />
      <At $l={-4} /><Divider />
      <At $l={0} /><Glyph n="checkdoc" s={15} />
      <At $l={-4} /><Glyph n="folder" s={17} />
      <At $l={-4} /><QuickMenu />
      <At $l={-3} /><Divider />
      <At $l={-3} /><span>Python</span>
    </TitleBar>
    <Tabs>
      <Tab $w={56} $kind="file">Arquivo</Tab>
      <Tab $w={55} $kind="on">Início</Tab>
      <Tab $w={98}>Compartilhar</Tab>
    </Tabs>
    <Ribbon>
      <Group $w={300} $bare>
        <GroupBody>
          <Tall $w={87}>
            <Gap $h={9} /><Glyph n="pin" s={21} /><Gap $h={8} />Fixar no<br />Acesso rápido
          </Tall>
          <Tall $w={32} $muted>
            <Gap $h={5} /><Glyph n="copy" s={28} /><Gap $h={5} />Copiar
          </Tall>
          <Tall $w={54} $muted>
            <Gap $h={5} /><Glyph n="copy" s={28} /><Gap $h={5} />Colar
          </Tall>
        </GroupBody>
        <GroupName $left={85}>Área de Transferência</GroupName>
      </Group>
    </Ribbon>
    <NavBar>
      <svg width="94" height="16" viewBox="0 0 94 16" fill="none" strokeWidth="1.800">
        <path d="M1.500 8h12M7 2.500L1.500 8 7 13.500" stroke="#6b6b6b" />
        <path d="M31 8h11M37 2.500L42.500 8 37 13.500" stroke="#d5d5d5" />
        <path d="M57.500 6l2.500 3 2.500-3" stroke="#777" />
        <path d="M81 14V2.500M75.500 8L81 2.500 86.500 8" stroke="#6b6b6b" />
      </svg>
      <Address>
        <Glyph n="folder" s={17} />
        <svg width="6" height="8" viewBox="0 0 6 8"><path d="M1 1l3 3-3 3" fill="none" stroke="#666" strokeWidth="1.500" /></svg>
      </Address>
    </NavBar>
    <Tree>
      <Node $d={26} $on><Glyph n="star" s={14} />Acesso rápido</Node>
      <Node><Glyph n="desk" />Área de Trabalho</Node>
      <Node><Glyph n="down" />Downloads</Node>
      <Node><Glyph n="doc" />Documentos</Node>
      <Node><Glyph n="image" />Imagens</Node>
      <Node><Glyph n="folder" />EspDireita</Node>
      <Node><Glyph n="folder" />EspEsquerda</Node>
      <Node><Glyph n="folder" />Qt</Node>
      <Node $d={24} $gap={8}><Glyph n="thispc" />Este Computador</Node>
      <Node><Glyph n="desk" />Área de Trabalho</Node>
      <Node><Glyph n="doc" />Documentos</Node>
      <Node><Glyph n="down" />Downloads</Node>
      <Node><Glyph n="image" />Imagens</Node>
      <Node><Glyph n="music" />Músicas</Node>
    </Tree>
    <Count>3 itens<CountRule /></Count>
  </Frame>
);

export default function App() {
  return (
    <>
      <Global />
      <Desktop>
        <Shortcuts />
        <Figure x={797} y={0} n={3} chart={monoxide} status="x=54.1854     y=128.328" />
        <Figure x={155} y={0} n={2} chart={humidity} />
        <Explorer />
        <Paint />
        <Figure x={700} y={176} n={1} chart={temperature} active />
        <TaskStrip tasks={mainTasks} tray />
      </Desktop>
    </>
  );
}
